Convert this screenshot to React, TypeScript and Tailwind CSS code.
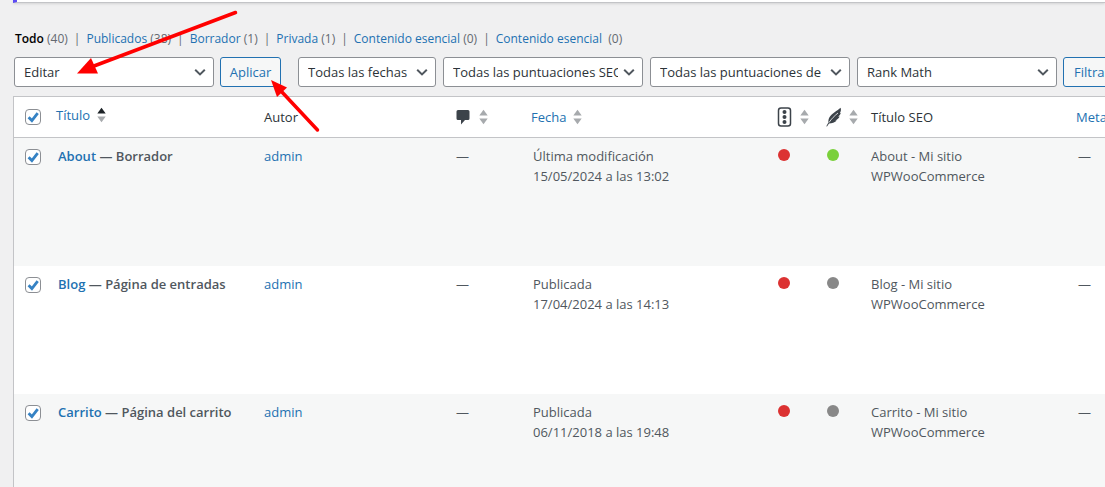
import { ReactNode } from "react";

type Page = {
  title: string;
  state: string;
  status: string;
  date: string;
  readable: boolean;
};

const views = [
  { label: "Publicados", count: 38 },
  { label: "Borrador", count: 1 },
  { label: "Privada", count: 1 },
  { label: "Contenido esencial", count: 0 },
  { label: "Contenido esencial ", count: 0 },
];

const pages: Page[] = [
  { title: "About", state: "Borrador", status: "Última modificación", date: "15/05/2024 a las 13:02", readable: true },
  { title: "Blog", state: "Página de entradas", status: "Publicada", date: "17/04/2024 a las 14:13", readable: false },
  { title: "Carrito", state: "Página del carrito", status: "Publicada", date: "06/11/2018 a las 19:48", readable: false },
];

function Select({ label, option, className }: { label: string; option: string; className: string }) {
  return (
    <div className={`relative shrink-0 ${className}`}>
      <select
        aria-label={label}
        className="block h-[30px] w-full appearance-none overflow-hidden rounded-[3px] border border-[#8c8f94] bg-white pr-6 pl-[9px] text-[13px] text-[#2c3338]"
      >
        <option>{option}</option>
      </select>
      <svg className="pointer-events-none absolute top-[9px] right-2 h-3 w-3" viewBox="0 0 12 12" fill="none">
        <path d="M1.2 3.8 6 8.4l4.8-4.6" stroke="#50575e" strokeWidth="2" />
      </svg>
    </div>
  );
}

function Sorter({ active = false }: { active?: boolean }) {
  return (
    <svg className="h-4 w-[9px] shrink-0" viewBox="0 0 9 16">
      <path d="M4.5 0.8 8.7 6.400H0.300z" fill={active ? "#1d2327" : "#a7aaad"} />
      <path d="M4.5 15.200 8.700 9.600H0.300z" fill="#a7aaad" />
    </svg>
  );
}

function SortLink({ children, label, active }: { children: ReactNode; label?: string; active?: boolean }) {
  return (
    <a href="#" aria-label={label} className="flex items-center gap-[7px] text-[#2271b1]">
      {children}
      <Sorter active={active} />
    </a>
  );
}

function Check({ label }: { label: string }) {
  return (
    <span className="relative block h-4 w-4">
      <input
        type="checkbox"
        defaultChecked
        aria-label={label}
        className="peer block h-4 w-4 appearance-none rounded-[4px] border border-[#8c8f94] bg-white"
      />
      <svg
        className="pointer-events-none absolute top-0 left-0 hidden h-4 w-4 peer-checked:block"
        viewBox="0 0 16 16"
        fill="none"
      >
        <path d="M3.6 8.2 6.900 11.600 12.700 4.200" stroke="#3582c4" strokeWidth="2.800" />
      </svg>
    </span>
  );
}

function CommentIcon() {
  return (
    <svg className="h-4 w-4" viewBox="0 0 16 16" fill="#3c434a">
      <path d="M2 1h10a1.500 1.500 0 0 1 1.500 1.500v7a1.500 1.500 0 0 1-1.500 1.500H9L5 15.500V11H2A1.500 1.500 0 0 1 0.500 9.500v-7A1.500 1.500 0 0 1 2 1z" />
    </svg>
  );
}

function SeoIcon() {
  return (
    <svg className="h-5 w-4" viewBox="0 0 16 20" fill="#3c434a">
      <rect x="1.500" y="1" width="12" height="18" rx="2.500" fill="none" stroke="#3c434a" strokeWidth="1.500" />
      <circle cx="7.500" cy="5" r="2" />
      <circle cx="7.500" cy="10" r="2" />
      <circle cx="7.500" cy="15" r="2" />
    </svg>
  );
}

function FeatherIcon() {
  return (
    <svg className="h-5 w-4" viewBox="0 0 16 20" fill="#3c434a">
      <path d="M14.600 0.800C11.500 3.600 5.500 6.500 3.200 10.800 2.400 12.500 2.300 14 2.400 15.400L0.300 19.200 1 19.500 3 16.600C5.800 16.600 9 15.600 10.800 13.600L9.300 13.500C11.300 12.600 12.900 11.300 13.700 9.600L12.200 9.800C13.500 8.700 14.400 7.500 14.800 6.100L13.900 6.300C15 4.500 15.200 2.500 14.600 0.800z" />
      <path d="M3 15.500C5.500 11.800 8.500 8.800 12 6" stroke="#fff" strokeWidth="0.800" fill="none" />
    </svg>
  );
}

export default function App() {
  return (
    <div className="relative h-screen overflow-hidden bg-[#f0f0f1] pl-[13px] font-['Open_Sans','Noto_Sans',sans-serif] text-[13px] leading-5 text-[#50575e]">
      <div className="h-[3px] border-b border-l-4 border-b-[#c3c4c7] border-l-[#5d4bf5] bg-white shadow-sm" />

      <ul className="mt-[26px] flex px-[2px] text-xs leading-5 whitespace-nowrap text-[#646970]">
        <li>
          <a href="#" className="font-semibold text-black">
            Todo
          </a>{" "}
          (40)
        </li>
        {views.map((view, index) => (
          <li key={index} className="whitespace-pre">
            <span className="px-[6px]">|</span>
            <a href="#" className="text-[#2271b1]">
              {view.label}
            </a>{" "}
            ({view.count})
          </li>
        ))}
      </ul>

      <div className="mt-2 flex pl-px">
        <Select label="Acciones en lote" option="Editar" className="w-[200px]" />
        <button className="ml-[6px] h-[30px] w-[61px] shrink-0 rounded-[3px] border border-[#2271b1] bg-[#f6f7f7] text-[#2271b1]">
          Aplicar
        </button>
        <div className="ml-[17px] flex gap-[7px]">
          <Select label="Filtrar por fecha" option="Todas las fechas" className="w-[138px]" />
          <Select label="Filtrar por puntuación SEO" option="Todas las puntuaciones SEO" className="w-[200px]" />
          <Select label="Filtrar por legibilidad" option="Todas las puntuaciones de" className="w-[200px]" />
          <Select label="Filtrar por Rank Math" option="Rank Math" className="w-[200px]" />
        </div>
        <button className="ml-[6px] h-[30px] shrink-0 rounded-[3px] border border-[#2271b1] bg-[#f6f7f7] px-[10px] text-[#2271b1]">
          Filtrar
        </button>
      </div>

      <table className="mt-[9px] w-full min-w-[1200px] table-fixed border-separate border-spacing-0 border border-[#c3c4c7] bg-white text-left">
        <colgroup>
          <col className="w-[34px]" />
          <col className="w-[208px]" />
          <col className="w-[192px]" />
          <col className="w-[75px]" />
          <col className="w-[247px]" />
          <col className="w-[49px]" />
          <col className="w-[44px]" />
          <col className="w-[205px]" />
          <col />
        </colgroup>
        <thead>
          <tr className="h-[41px] text-[#2c3338] [&>th]:border-b [&>th]:border-[#c3c4c7] [&>th]:font-normal">
            <th className="pl-[11px]">
              <Check label="Seleccionar todo" />
            </th>
            <th className="pb-1 pl-2">
              <SortLink active>Título</SortLink>
            </th>
            <th className="pl-2">Autor</th>
            <th className="pl-2">
              <SortLink label="Comentarios">
                <CommentIcon />
              </SortLink>
            </th>
            <th className="pl-2">
              <SortLink>Fecha</SortLink>
            </th>
            <th className="pl-[7px]">
              <SortLink label="Puntuación SEO">
                <SeoIcon />
              </SortLink>
            </th>
            <th className="pl-[7px]">
              <SortLink label="Legibilidad">
                <FeatherIcon />
              </SortLink>
            </th>
            <th className="pl-2">Título SEO</th>
            <th className="pl-2 whitespace-nowrap text-[#2271b1]">
              <a href="#">Metadescripción</a>
            </th>
          </tr>
        </thead>
        <tbody>
          {pages.map((page) => (
            <tr key={page.title} className="h-[128px] align-top odd:bg-[#f6f7f7] [&>td]:pt-2">
              <td className="pl-[11px]">
                <div className="pt-[3px]">
                  <Check label={`Seleccionar ${page.title}`} />
                </div>
              </td>
              <td className="pl-[10px] font-semibold whitespace-nowrap">
                <a href="#" className="text-[#2271b1]">
                  {page.title}
                </a>{" "}
                — {page.state}
              </td>
              <td className="pl-2">
                <a href="#" className="text-[#2271b1]">
                  admin
                </a>
              </td>
              <td className="pl-2">—</td>
              <td className="pl-[10px]">
                {page.status}
                <br />
                {page.date}
              </td>
              <td className="pl-2">
                <div className="mt-[3px] h-3 w-3 rounded-full bg-[#dc3232]" />
              </td>
              <td className="pl-2">
                <div className={`mt-[3px] h-3 w-3 rounded-full ${page.readable ? "bg-[#7ad03a]" : "bg-[#888888]"}`} />
              </td>
              <td className="pl-2">
                {page.title} - Mi sitio
                <br />
                WPWooCommerce
              </td>
              <td className="pl-[10px]">—</td>
            </tr>
          ))}
        </tbody>
      </table>

      <svg className="pointer-events-none absolute top-0 left-0 h-[140px] w-[330px]" viewBox="0 0 330 140" fill="#ff0000">
        <path d="M235.500 12.500 94 66" stroke="#ff0000" strokeWidth="3.500" strokeLinecap="round" />
        <path d="M77 73.500 91 58 98 73.500z" />
        <path d="M317.500 130 281 91" stroke="#ff0000" strokeWidth="3.500" strokeLinecap="round" />
        <path d="M271 80 287 87.500 277 97z" />
      </svg>
    </div>
  );
}
